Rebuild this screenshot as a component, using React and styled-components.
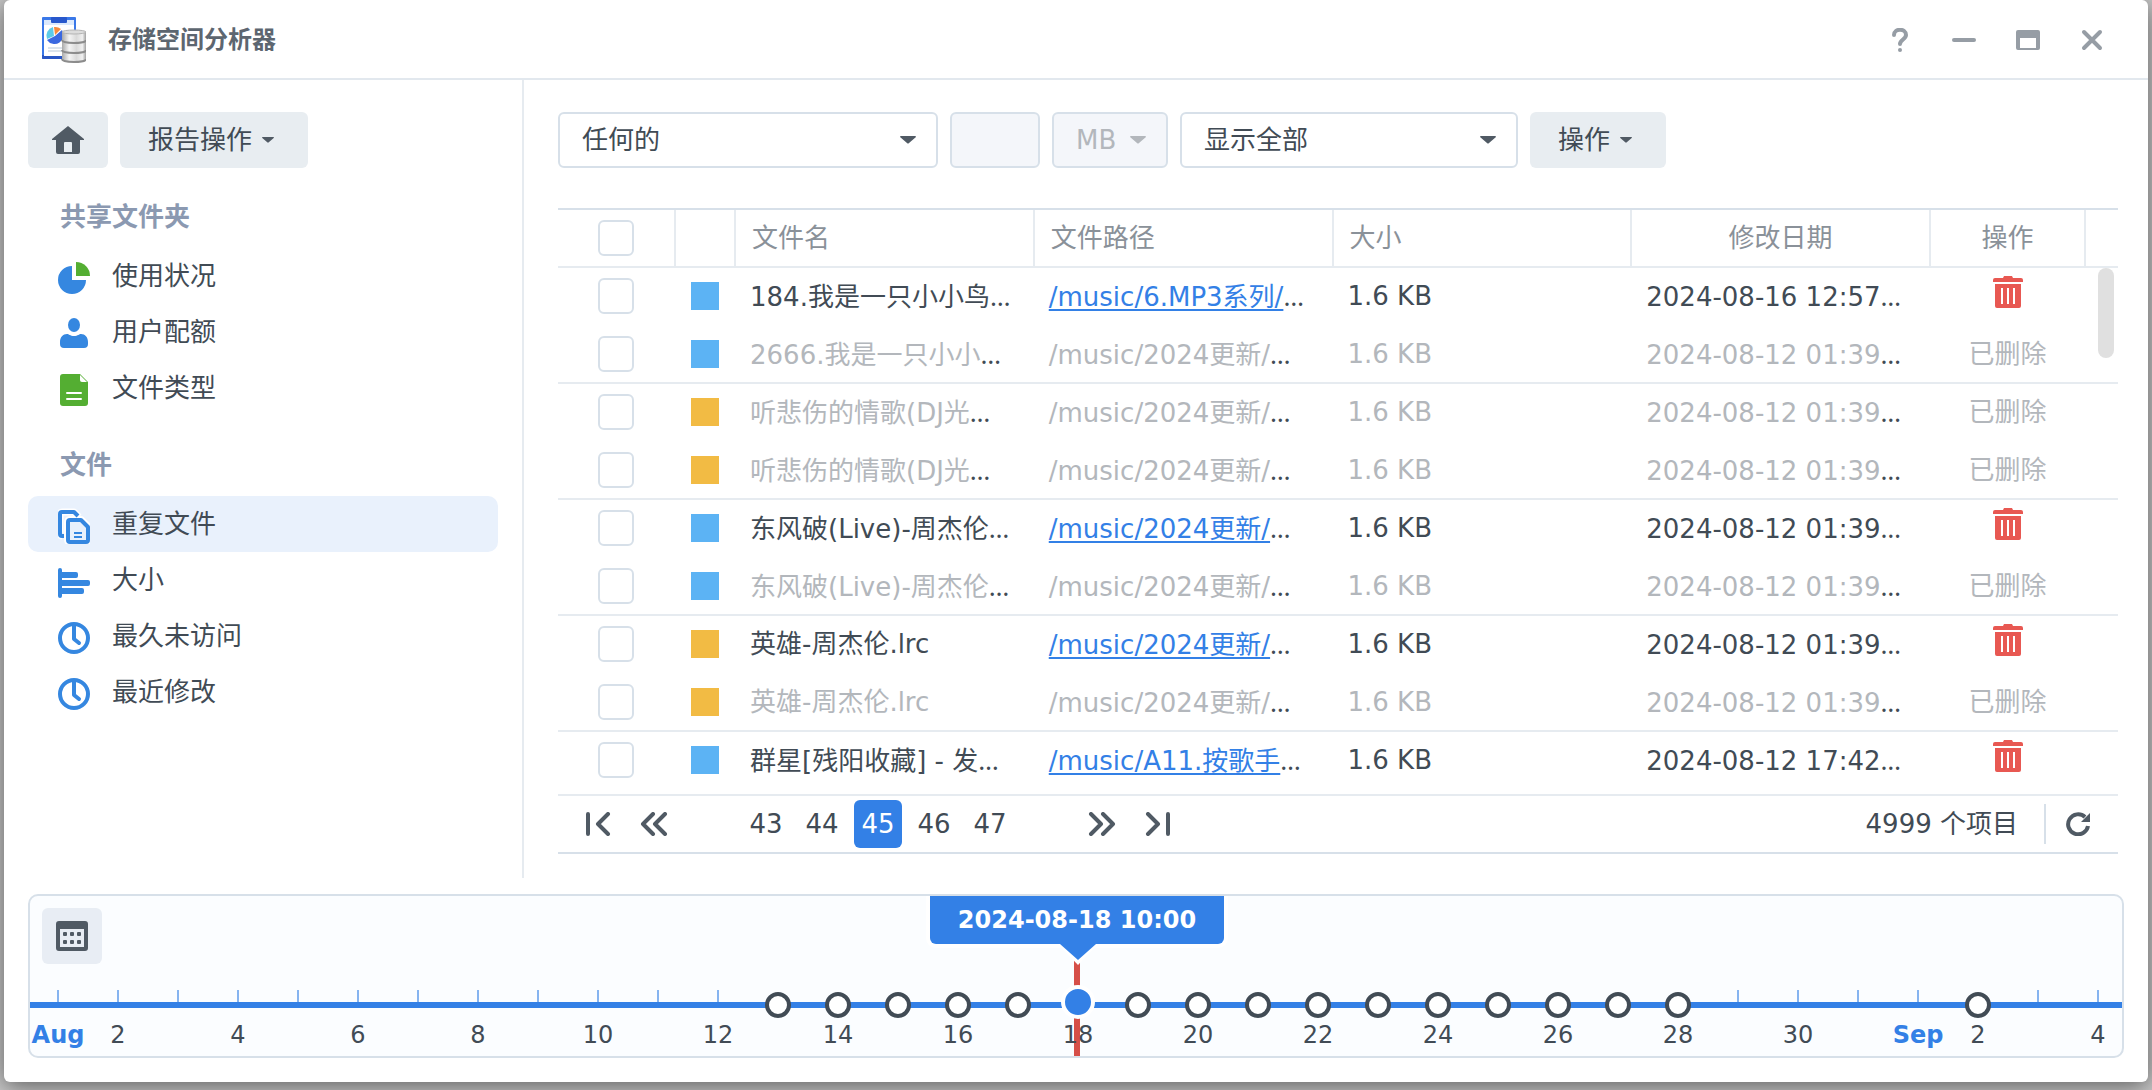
import { useState } from "react";
import styled, { createGlobalStyle, ThemeProvider } from "styled-components";

const theme = {
  colors: {
    border: "#d7e0e9",
    dark: "#414b55",
    descriptive: "#8a9199",
    disabled: "#b3b7bc",
    heading: "#8b99b1",
    icon: "#505a64",
    line: "#e6ebf0",
    primary: "#3380e6",
    red: "#e85852",
    surface: "#e8edf1",
  },
};

const GlobalStyle = createGlobalStyle`
  *, *:before, *:after {
    box-sizing: border-box;
  }

  body {
    background-color: #c8c8c8;
    color: ${theme.colors.dark};
    font-family: "DejaVu Sans", "Noto Sans CJK SC", sans-serif;
    font-size: 26px;
    line-height: 36px;
    margin: 0;
  }

  button, input, select {
    color: inherit;
    font: inherit;
    margin: 0;
  }

  svg {
    display: block;
    flex: none;
  }
`;

const Desktop = styled.div`
  display: flex;
  height: 100vh;
  overflow: hidden;
  padding: 0 4px 8px;
`;

const Window = styled.div`
  background-color: #ffffff;
  border-radius: 6px;
  box-shadow: 0 4px 24px rgba(0, 0, 0, 0.55);
  display: flex;
  flex: 1;
  flex-direction: column;
  min-width: 0;
`;

const TitleBar = styled.header`
  align-items: center;
  border-bottom: 2px solid #e2e8ee;
  display: flex;
  flex: none;
  height: 80px;
  padding: 2px 36px 0 38px;
`;

const Title = styled.h1`
  color: #5d6670;
  flex: 1;
  font-size: 24px;
  font-weight: bold;
  margin: 0 0 0 22px;
`;

const WindowControls = styled.div`
  display: flex;
  gap: 24px;
`;

const IconButton = styled.button.attrs({ type: "button" })`
  align-items: center;
  background-color: transparent;
  border: 0;
  cursor: pointer;
  display: flex;
  height: 40px;
  justify-content: center;
  padding: 0;
  width: 40px;
`;

const Body = styled.div`
  display: flex;
  flex: 1;
  min-height: 0;
`;

const Sidebar = styled.nav`
  border-right: 2px solid ${({ theme: { colors } }) => colors.line};
  flex: none;
  padding: 32px 24px 0;
  width: 520px;
`;

const SidebarActions = styled.div`
  display: flex;
  gap: 12px;
`;

const Button = styled.button.attrs({ type: "button" })`
  align-items: center;
  background-color: ${({ theme: { colors } }) => colors.surface};
  border: 0;
  border-radius: 6px;
  cursor: pointer;
  display: flex;
  flex: none;
  gap: 10px;
  height: 56px;
  padding: ${({ $icon }) => ($icon ? "0 24px" : "0 34px 0 28px")};
`;

const SectionTitle = styled.h2`
  color: ${({ theme: { colors } }) => colors.heading};
  font-size: 26px;
  font-weight: bold;
  height: 80px;
  line-height: 62px;
  margin: 0;
  padding: 18px 32px 0;
`;

const NavItem = styled.a`
  align-items: center;
  background-color: ${({ $active }) => ($active ? "#e9f1fc" : "transparent")};
  border-radius: 10px;
  color: inherit;
  display: flex;
  gap: 22px;
  height: 56px;
  padding: 0 30px;
  text-decoration: none;
`;

const Main = styled.main`
  display: flex;
  flex: 1;
  flex-direction: column;
  min-width: 0;
  padding: 32px 30px 24px 34px;
`;

const Toolbar = styled.div`
  display: flex;
  flex: none;
  gap: 12px;
  margin-bottom: 40px;
`;

const SelectBox = styled.div`
  align-items: center;
  display: grid;
  width: ${({ $width }) => $width}px;

  > * {
    grid-area: 1 / 1;
  }

  > svg {
    justify-self: end;
    margin-right: 22px;
    pointer-events: none;
  }
`;

const Select = styled.select`
  appearance: none;
  background-color: #ffffff;
  border: 2px solid ${({ theme: { colors } }) => colors.border};
  border-radius: 6px;
  height: 56px;
  padding: 0 22px;
  width: 100%;

  &:disabled {
    background-color: #f4f6fa;
    color: ${({ theme: { colors } }) => colors.disabled};
    opacity: 1;
    padding-right: 0;
  }
`;

const SizeInput = styled.input`
  background-color: #f4f6fa;
  border: 2px solid ${({ theme: { colors } }) => colors.border};
  border-radius: 6px;
  height: 56px;
  padding: 0 12px;
  width: 90px;
`;

const TableView = styled.div`
  border-top: 2px solid ${({ theme: { colors } }) => colors.border};
  flex: 1;
  min-height: 0;
  overflow: hidden;
  position: relative;
`;

const ScrollThumb = styled.div`
  background-color: #e0e0e0;
  border-radius: 8px;
  height: 90px;
  position: absolute;
  right: 4px;
  top: 58px;
  width: 16px;
`;

const Table = styled.table`
  border-collapse: separate;
  border-spacing: 0;
  table-layout: fixed;
  width: 100%;
`;

const HeadCell = styled.th`
  border-bottom: 2px solid ${({ theme: { colors } }) => colors.line};
  border-right: ${({ $last, theme: { colors } }) =>
    $last ? "0" : `2px solid ${colors.line}`};
  color: ${({ theme: { colors } }) => colors.descriptive};
  font-weight: normal;
  height: 58px;
  padding: ${({ $center }) => ($center ? "0" : "0 16px")};
  text-align: ${({ $center }) => ($center ? "center" : "left")};
`;

const Row = styled.tr`
  > td {
    border-bottom: 2px solid
      ${({ $groupEnd, theme: { colors } }) =>
        $groupEnd ? colors.line : "transparent"};
  }
`;

const Cell = styled.td`
  height: 58px;
  padding: ${({ $center }) => ($center ? "0 2px 0 0" : "0 0 0 14px")};
  text-align: ${({ $center }) => ($center ? "center" : "left")};
  white-space: nowrap;
`;

const Checkbox = styled.input.attrs({ type: "checkbox" })`
  appearance: none;
  background-color: #ffffff;
  border: 2px solid ${({ theme: { colors } }) => colors.border};
  border-radius: 6px;
  display: block;
  height: 36px;
  margin: 0 auto;
  width: 36px;

  &:checked {
    background-color: ${({ theme: { colors } }) => colors.primary};
  }
`;

const Swatch = styled.div`
  background-color: ${({ $color }) => ($color === "blue" ? "#5cb3f4" : "#f2bb44")};
  height: 28px;
  margin: 0 auto;
  width: 28px;
`;

const Faded = styled.span`
  color: ${({ theme: { colors } }) => colors.disabled};
`;

const PathLink = styled.a`
  color: ${({ theme: { colors } }) => colors.primary};
  text-decoration: underline;
  text-decoration-skip-ink: none;
  text-decoration-thickness: 2px;
  text-underline-offset: 3px;
`;

const Dots = styled.span`
  font-family: "Noto Sans", sans-serif;
`;

const DeleteButton = styled(IconButton)`
  margin: 0 auto 8px;
`;

const Pager = styled.div`
  align-items: center;
  border-bottom: 2px solid ${({ theme: { colors } }) => colors.border};
  border-top: 2px solid ${({ theme: { colors } }) => colors.line};
  display: flex;
  flex: none;
  gap: 8px;
  height: 60px;
  padding: 0 16px;
`;

const PageNumbers = styled.div`
  display: flex;
  gap: 8px;
  margin: 0 56px;
`;

const PageButton = styled.button.attrs({ type: "button" })`
  align-items: center;
  background-color: ${({ $active, theme: { colors } }) =>
    $active ? colors.primary : "transparent"};
  border: 0;
  border-radius: 6px;
  color: ${({ $active, theme: { colors } }) =>
    $active ? "#ffffff" : colors.dark};
  cursor: pointer;
  display: flex;
  height: 48px;
  justify-content: center;
  padding: 0;
  width: 48px;
`;

const ItemCount = styled.span`
  border-right: 2px solid ${({ theme: { colors } }) => colors.border};
  line-height: 40px;
  margin-left: auto;
  padding-right: 26px;
`;

const Timeline = styled.section`
  background-color: #fbfdff;
  border: 2px solid ${({ theme: { colors } }) => colors.border};
  border-radius: 10px;
  flex: none;
  margin: 16px 24px 24px;
  overflow: hidden;
  padding-bottom: 6px;
`;

const CalendarButton = styled(IconButton)`
  background-color: #e8edf4;
  border-radius: 6px;
  height: 56px;
  margin: 12px 12px 26px;
  width: 60px;
`;

const Days = styled.ol`
  display: flex;
  list-style: none;
  margin: 0 0 0 -2px;
  padding: 0;
`;

const Day = styled.li`
  align-items: center;
  display: flex;
  flex: none;
  flex-direction: column;
  position: relative;
  width: 60px;
`;

const Tick = styled.div`
  background-color: ${({ $hidden }) => ($hidden ? "transparent" : "#86b4f0")};
  height: 12px;
  width: 2px;
`;

const Axis = styled.div`
  background-color: ${({ theme: { colors } }) => colors.primary};
  height: 6px;
  margin-bottom: 12px;
  width: 100%;
`;

const DayLabel = styled.span`
  color: ${({ $month, theme: { colors } }) =>
    $month ? colors.primary : colors.dark};
  font-size: 24px;
  font-weight: ${({ $month }) => ($month ? "bold" : "normal")};
  height: 30px;
  line-height: 30px;
  position: relative;
`;

const Snapshot = styled.button.attrs({ type: "button" })`
  background-color: #ffffff;
  border: 4px solid ${({ theme: { colors } }) => colors.dark};
  border-radius: 50%;
  cursor: pointer;
  height: 26px;
  left: 17px;
  padding: 0;
  position: absolute;
  top: 2px;
  width: 26px;
`;

const Needle = styled.div`
  background-color: #d64f48;
  bottom: -6px;
  left: 26px;
  position: absolute;
  top: -30px;
  width: 6px;
`;

const Knob = styled(Snapshot)`
  background-color: ${({ theme: { colors } }) => colors.primary};
  border-color: #ffffff;
  height: 34px;
  left: 13px;
  top: -5px;
  width: 34px;
`;

const Flag = styled.div`
  background-color: ${({ theme: { colors } }) => colors.primary};
  border-radius: 0 0 6px 6px;
  box-shadow: 0 0 0 4px #ffffff;
  color: #ffffff;
  font-size: 24px;
  font-weight: bold;
  left: -118px;
  line-height: 48px;
  position: absolute;
  text-align: center;
  top: -94px;
  width: 294px;

  > svg {
    left: 128px;
    position: absolute;
    top: 47px;
  }
`;

const NAV = [
  {
    title: "共享文件夹",
    items: [
      { icon: "usage", label: "使用状况" },
      { icon: "user", label: "用户配额" },
      { icon: "file", label: "文件类型" },
    ],
  },
  {
    title: "文件",
    items: [
      { icon: "copy", label: "重复文件" },
      { icon: "bars", label: "大小" },
      { icon: "clock", label: "最久未访问" },
      { icon: "clock", label: "最近修改" },
    ],
  },
];

const FILES = [
  { name: "184.我是一只小小鸟…", path: "/music/6.MP3系列/…", date: "2024-08-16 12:57…", color: "blue" },
  { name: "2666.我是一只小小…", path: "/music/2024更新/…", date: "2024-08-12 01:39…", color: "blue", deleted: true },
  { name: "听悲伤的情歌(DJ光…", path: "/music/2024更新/…", date: "2024-08-12 01:39…", color: "yellow", deleted: true },
  { name: "听悲伤的情歌(DJ光…", path: "/music/2024更新/…", date: "2024-08-12 01:39…", color: "yellow", deleted: true },
  { name: "东风破(Live)-周杰伦…", path: "/music/2024更新/…", date: "2024-08-12 01:39…", color: "blue" },
  { name: "东风破(Live)-周杰伦…", path: "/music/2024更新/…", date: "2024-08-12 01:39…", color: "blue", deleted: true },
  { name: "英雄-周杰伦.lrc", path: "/music/2024更新/…", date: "2024-08-12 01:39…", color: "yellow" },
  { name: "英雄-周杰伦.lrc", path: "/music/2024更新/…", date: "2024-08-12 01:39…", color: "yellow", deleted: true },
  { name: "群星[残阳收藏] - 发…", path: "/music/A11.按歌手…", date: "2024-08-12 17:42…", color: "blue" },
];

const PAGES = [43, 44, 45, 46, 47];

const CURRENT_DAY = 17;

// Aug 1 to Sep 4, one column per day
const DAYS = Array.from({ length: 35 }, (_, index) => {
  const date = index < 31 ? index + 1 : index - 30;
  let label = date % 2 === 0 ? String(date) : "";
  if (index === 0) label = "Aug";
  if (index === 31) label = "Sep";

  return {
    label,
    month: date === 1,
    snapshot: (index >= 12 && index <= 27) || index === 32,
  };
});

const NavIcon = ({ name }) => (
  <svg width="32" height="40" viewBox="0 0 32 40" fill="#3587e0" aria-hidden="true">
    {name === "usage" && (
      <>
        <path d="M14 10A14 14 0 1 0 28 24H14z" />
        <path d="M18 6a14 14 0 0 1 14 14H18z" fill="#54ae32" />
      </>
    )}
    {name === "user" && (
      <>
        <ellipse cx="16" cy="13" rx="6" ry="7" />
        <path d="M2 30c0-5 3-8 7-8 2 0 3 2 7 2s5-2 7-2c4 0 7 3 7 8v2a4 4 0 0 1-4 4H6a4 4 0 0 1-4-4z" />
      </>
    )}
    {name === "file" && (
      <>
        <path d="M5 6h17l8 8v21a3 3 0 0 1-3 3H5a3 3 0 0 1-3-3V9a3 3 0 0 1 3-3z" fill="#54ae32" />
        <path d="M22 7v5a2 2 0 0 0 2 2h5z" fill="#ffffff" />
        <path d="M9 25h14M9 31h14" stroke="#ffffff" strokeWidth="2" strokeLinecap="round" />
      </>
    )}
    {name === "copy" && (
      <g fill="none" strokeLinejoin="round">
        <path d="M4 32a2 2 0 0 1-2-2V10a2 2 0 0 1 2-2h12l5 5" stroke="#ffffff" strokeWidth="7" />
        <path d="M12 16h11l7 7v13a2 2 0 0 1-2 2H12a2 2 0 0 1-2-2V18a2 2 0 0 1 2-2z" fill="#e9f1fc" stroke="#ffffff" strokeWidth="8" />
        <path d="M6 32H4a2 2 0 0 1-2-2V10a2 2 0 0 1 2-2h12l4 4" stroke="#3587e0" strokeWidth="4" />
        <path d="M12 16h11l7 7v13a2 2 0 0 1-2 2H12a2 2 0 0 1-2-2V18a2 2 0 0 1 2-2z" fill="#e9f1fc" stroke="#3587e0" strokeWidth="4" />
        <path d="M16 29h8M16 33h8" stroke="#3587e0" strokeWidth="2" />
      </g>
    )}
    {name === "bars" && (
      <>
        <rect y="8" width="4" height="30" rx="2" />
        <path d="M4 12h14a2 2 0 0 1 2 2v2a2 2 0 0 1-2 2H4zM4 20h26a2 2 0 0 1 2 2v2a2 2 0 0 1-2 2H4zM4 28h20a2 2 0 0 1 2 2v2a2 2 0 0 1-2 2H4z" />
      </>
    )}
    {name === "clock" && (
      <g fill="none" stroke="#3587e0">
        <circle cx="16" cy="22" r="14" strokeWidth="4" />
        <path d="M16 10v13l5 4" strokeWidth="4" strokeLinecap="round" strokeLinejoin="round" />
      </g>
    )}
  </svg>
);

const Logo = () => (
  <svg width="44" height="46" viewBox="0 0 44 46" aria-hidden="true">
    <defs>
      <linearGradient id="steel">
        <stop offset="0" stopColor="#a9a9a9" />
        <stop offset="0.3" stopColor="#f4f4f4" />
        <stop offset="0.6" stopColor="#d9d9d9" />
        <stop offset="0.85" stopColor="#f0f0f0" />
        <stop offset="1" stopColor="#a0a0a0" />
      </linearGradient>
    </defs>
    <path d="M1 0h32a1 1 0 0 1 1 1v41H1a1 1 0 0 1-1-1V1a1 1 0 0 1 1-1z" fill="#3a78e8" />
    <path d="M0 38h20v4H1a1 1 0 0 1-1-1z" fill="#2a56c4" />
    <rect x="2" y="3" width="30" height="36" fill="#ffffff" />
    <rect x="2" y="3" width="30" height="5" fill="#dbe9fc" />
    <rect x="9" y="0" width="16" height="6" rx="1" fill="#2858cc" />
    <path d="M6 31h14M6 34h14" stroke="#b8c8d8" strokeWidth="1" />
    <path d="M13 19L5 23A9 9 0 1 0 20 13z" fill="#3a68e0" />
    <path d="M12 19l-7 3A9 9 0 0 1 11 10z" fill="#5ccbe8" />
    <path d="M13 18l-1-8A9 9 0 0 1 19 12z" fill="#f58a3c" />
    <path d="M20 15v27c0 4 24 4 24 0V15z" fill="url(#steel)" />
    <ellipse cx="32" cy="15" rx="12" ry="2" fill="#dcdcdc" stroke="#b4b4b4" />
    <path d="M20 23c0 4 24 4 24 0M20 33c0 4 24 4 24 0M20 42c0 4 24 4 24 0" fill="none" stroke="#8c8c8c" strokeWidth="2" />
  </svg>
);

const Caret = ({ small, color = theme.colors.icon }) => (
  <svg
    width={small ? 12 : 16}
    height={small ? 6 : 8}
    viewBox="0 0 16 8"
    fill={color}
    aria-hidden="true"
  >
    <path d="M1 0h14q1 0 1 1L9 7q-1 1-2 0L0 1q0-1 1-1z" />
  </svg>
);

const HomeIcon = () => (
  <svg width="32" height="28" viewBox="0 0 32 28" fill={theme.colors.icon} aria-hidden="true">
    <path d="M16 0l16 13v1h-4v12a2 2 0 0 1-2 2H6a2 2 0 0 1-2-2V14H0v-1zM13 16a1 1 0 0 0-1 1v9h8v-9a1 1 0 0 0-1-1z" fillRule="evenodd" />
  </svg>
);

const ControlIcon = ({ name }) => (
  <svg width="24" height="24" viewBox="0 0 24 24" fill="none" stroke="#969da5" strokeWidth="4" strokeLinecap="round" aria-hidden="true">
    {name === "help" && (
      <>
        <path d="M6 7c0-7 12-7 12 0 0 4-6 5-6 9" />
        <circle cx="12" cy="22" r="2" fill="#969da5" stroke="none" />
      </>
    )}
    {name === "minimize" && <path d="M2 12h20" />}
    {name === "maximize" && (
      <path
        d="M2 2h20a2 2 0 0 1 2 2v16a2 2 0 0 1-2 2H2a2 2 0 0 1-2-2V4a2 2 0 0 1 2-2zM4 10v10h16V10z"
        fill="#969da5"
        fillRule="evenodd"
        stroke="none"
      />
    )}
    {name === "close" && <path d="M4 4l16 16M20 4L4 20" />}
  </svg>
);

const PagerIcon = ({ name }) => (
  <svg width="28" height="24" viewBox="0 0 28 24" fill="none" stroke={theme.colors.icon} strokeWidth="4" strokeLinecap="round" strokeLinejoin="round" aria-hidden="true">
    {name === "first" && <path d="M4 2v20M24 2L14 12l10 10" />}
    {name === "prev" && <path d="M13 2L3 12l10 10M25 2L15 12l10 10" />}
    {name === "next" && <path d="M3 2l10 10L3 22M15 2l10 10-10 10" />}
    {name === "last" && <path d="M4 2l10 10L4 22M24 2v20" />}
  </svg>
);

const RefreshIcon = () => (
  <svg width="24" height="24" viewBox="0 0 24 24" fill="none" aria-hidden="true">
    <path d="M22 14A10 10 0 1 1 19 5" stroke={theme.colors.icon} strokeWidth="4" />
    <path d="M24 1v9h-9z" fill={theme.colors.icon} />
  </svg>
);

const TrashIcon = () => (
  <svg width="30" height="32" viewBox="0 0 30 32" fill={theme.colors.red} aria-hidden="true">
    <path d="M11 0h8l1 2h8a2 2 0 0 1 2 2v2H0V4a2 2 0 0 1 2-2h8z" />
    <path d="M2 8h26v22a2 2 0 0 1-2 2H4a2 2 0 0 1-2-2zM8 12v16h2V12zM14 12v16h2V12zM20 12v16h2V12z" fillRule="evenodd" />
  </svg>
);

const CalendarIcon = () => (
  <svg width="32" height="30" viewBox="0 0 32 30" fill={theme.colors.icon} aria-hidden="true">
    <path d="M3 0h26a3 3 0 0 1 3 3v24a3 3 0 0 1-3 3H3a3 3 0 0 1-3-3V3a3 3 0 0 1 3-3zM4 8v18h24V8z" fillRule="evenodd" />
    {[7, 14, 21].map((x) => (
      <g key={x}>
        <rect x={x} y="11" width="4" height="4" rx="1" />
        <rect x={x} y="19" width="4" height="4" rx="1" />
      </g>
    ))}
  </svg>
);

// The dots stay dark even where the text itself is faded or linked
const Clipped = ({ as: Wrapper, text, ...props }) => {
  const clipped = text.endsWith("…");
  const value = clipped ? text.slice(0, -1) : text;

  return (
    <>
      {Wrapper ? <Wrapper {...props}>{value}</Wrapper> : value}
      {clipped && <Dots>…</Dots>}
    </>
  );
};

const FileRow = ({ file, groupEnd }) => {
  const text = file.deleted ? Faded : undefined;

  return (
    <Row $groupEnd={groupEnd}>
      <Cell $center>
        <Checkbox aria-label={file.name} />
      </Cell>
      <Cell $center>
        <Swatch $color={file.color} />
      </Cell>
      <Cell>
        <Clipped as={text} text={file.name} />
      </Cell>
      <Cell>
        {file.deleted ? (
          <Clipped as={Faded} text={file.path} />
        ) : (
          <Clipped as={PathLink} href="#path" text={file.path} />
        )}
      </Cell>
      <Cell>
        <Clipped as={text} text="1.6 KB" />
      </Cell>
      <Cell>
        <Clipped as={text} text={file.date} />
      </Cell>
      <Cell $center>
        {file.deleted ? (
          <Faded>已删除</Faded>
        ) : (
          <DeleteButton aria-label="删除">
            <TrashIcon />
          </DeleteButton>
        )}
      </Cell>
      <Cell />
    </Row>
  );
};

const FileTable = () => (
  <TableView>
    <Table>
      <colgroup>
        <col width="118" />
        <col width="60" />
        <col />
        <col />
        <col />
        <col />
        <col width="155" />
        <col width="32" />
      </colgroup>
      <thead>
        <tr>
          <HeadCell $center>
            <Checkbox aria-label="全选" />
          </HeadCell>
          <HeadCell />
          <HeadCell>文件名</HeadCell>
          <HeadCell>文件路径</HeadCell>
          <HeadCell>大小</HeadCell>
          <HeadCell $center>修改日期</HeadCell>
          <HeadCell $center>操作</HeadCell>
          <HeadCell $last />
        </tr>
      </thead>
      <tbody>
        {FILES.map((file, index) => (
          <FileRow key={index} file={file} groupEnd={index % 2 === 1} />
        ))}
      </tbody>
    </Table>
    <ScrollThumb />
  </TableView>
);

const Pagination = () => {
  const [page, setPage] = useState(45);

  return (
    <Pager>
      <PageButton aria-label="第一页" onClick={() => setPage(43)}>
        <PagerIcon name="first" />
      </PageButton>
      <PageButton aria-label="上一页" onClick={() => setPage(Math.max(43, page - 1))}>
        <PagerIcon name="prev" />
      </PageButton>
      <PageNumbers>
        {PAGES.map((number) => (
          <PageButton
            key={number}
            $active={number === page}
            onClick={() => setPage(number)}
          >
            {number}
          </PageButton>
        ))}
      </PageNumbers>
      <PageButton aria-label="下一页" onClick={() => setPage(Math.min(47, page + 1))}>
        <PagerIcon name="next" />
      </PageButton>
      <PageButton aria-label="最后一页" onClick={() => setPage(47)}>
        <PagerIcon name="last" />
      </PageButton>
      <ItemCount>4999 个项目</ItemCount>
      <PageButton aria-label="刷新">
        <RefreshIcon />
      </PageButton>
    </Pager>
  );
};

const SnapshotTimeline = () => (
  <Timeline>
    <CalendarButton aria-label="日历">
      <CalendarIcon />
    </CalendarButton>
    <Days>
      {DAYS.map(({ label, month, snapshot }, index) => (
        <Day key={index}>
          <Tick $hidden={snapshot} />
          <Axis />
          {index === CURRENT_DAY && (
            <>
              <Needle />
              <Flag>
                2024-08-18 10:00
                <svg width="40" height="22" viewBox="0 0 40 22" aria-hidden="true">
                  <path d="M0 1h40L20 22z" fill="#ffffff" />
                  <path d="M2 0h36v1L20 17 2 1z" fill={theme.colors.primary} />
                </svg>
              </Flag>
              <Knob aria-label="2024-08-18 10:00" />
            </>
          )}
          {snapshot && index !== CURRENT_DAY && (
            <Snapshot aria-label={`报告 ${index + 1}`} />
          )}
          {label && <DayLabel $month={month}>{label}</DayLabel>}
        </Day>
      ))}
    </Days>
  </Timeline>
);

const App = () => {
  const [active, setActive] = useState("重复文件");

  return (
    <ThemeProvider theme={theme}>
      <GlobalStyle />
      <Desktop>
        <Window>
          <TitleBar>
            <Logo />
            <Title>存储空间分析器</Title>
            <WindowControls>
              <IconButton aria-label="帮助">
                <ControlIcon name="help" />
              </IconButton>
              <IconButton aria-label="最小化">
                <ControlIcon name="minimize" />
              </IconButton>
              <IconButton aria-label="最大化">
                <ControlIcon name="maximize" />
              </IconButton>
              <IconButton aria-label="关闭">
                <ControlIcon name="close" />
              </IconButton>
            </WindowControls>
          </TitleBar>

          <Body>
            <Sidebar>
              <SidebarActions>
                <Button $icon aria-label="主页">
                  <HomeIcon />
                </Button>
                <Button>
                  报告操作 <Caret small />
                </Button>
              </SidebarActions>
              {NAV.map(({ title, items }) => (
                <div key={title}>
                  <SectionTitle>{title}</SectionTitle>
                  {items.map(({ icon, label }) => (
                    <NavItem
                      key={label}
                      href={`#${label}`}
                      $active={label === active}
                      onClick={() => setActive(label)}
                    >
                      <NavIcon name={icon} />
                      {label}
                    </NavItem>
                  ))}
                </div>
              ))}
            </Sidebar>

            <Main>
              <Toolbar>
                <SelectBox $width={380}>
                  <Select aria-label="大小条件">
                    <option>任何的</option>
                  </Select>
                  <Caret />
                </SelectBox>
                <SizeInput aria-label="大小" disabled />
                <SelectBox $width={116}>
                  <Select aria-label="单位" disabled>
                    <option>MB</option>
                  </Select>
                  <Caret color={theme.colors.disabled} />
                </SelectBox>
                <SelectBox $width={338}>
                  <Select aria-label="显示">
                    <option>显示全部</option>
                  </Select>
                  <Caret />
                </SelectBox>
                <Button>
                  操作 <Caret small />
                </Button>
              </Toolbar>
              <FileTable />
              <Pagination />
            </Main>
          </Body>

          <SnapshotTimeline />
        </Window>
      </Desktop>
    </ThemeProvider>
  );
};

export default App;
